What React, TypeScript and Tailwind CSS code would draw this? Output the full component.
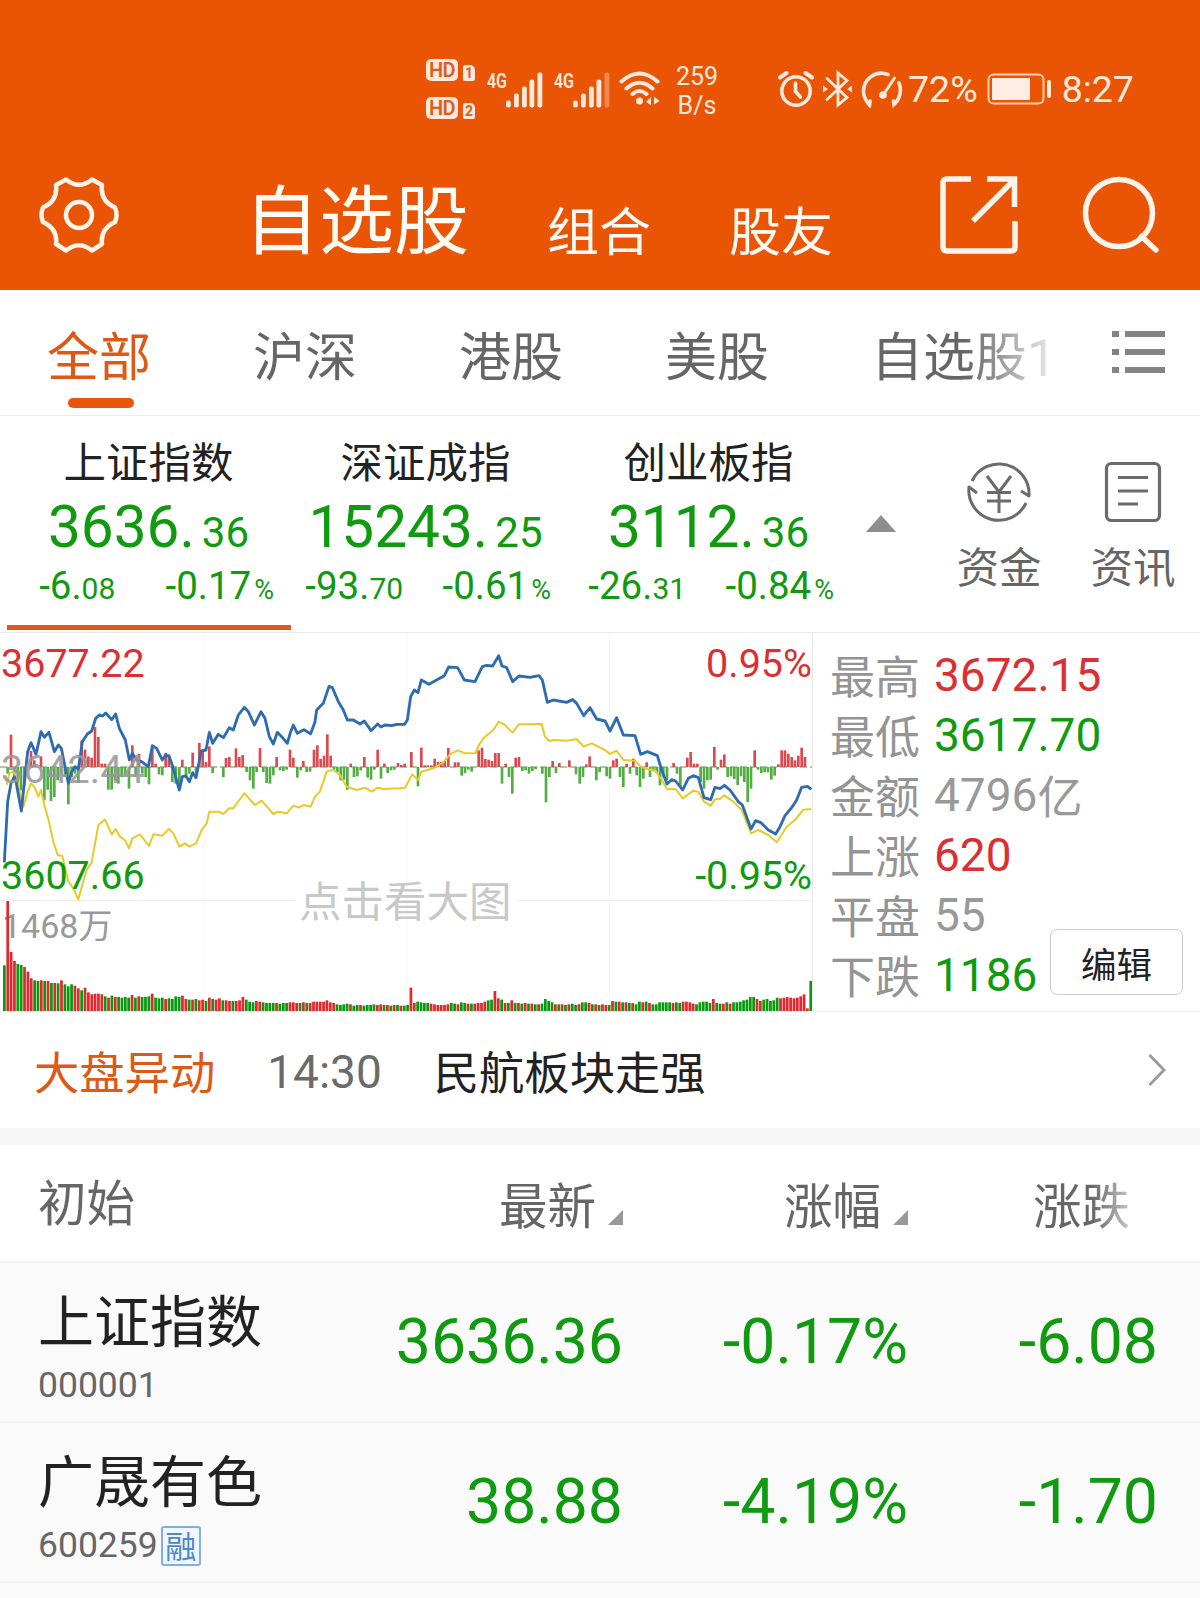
import { ReactNode } from 'react';

// ── Data ──────────────────────────────────────────────────────

const TABS = ['全部', '沪深', '港股', '美股'];

const INDICES = [
  { name: '上证指数', int: '3636.', dec: '36', chg: '-6.', chgDec: '08', pct: '-0.17', spacing: '-mr-[4px]' },
  { name: '深证成指', int: '15243.', dec: '25', chg: '-93.', chgDec: '70', pct: '-0.61', spacing: 'mr-[2px]' },
  { name: '创业板指', int: '3112.', dec: '36', chg: '-26.', chgDec: '31', pct: '-0.84', spacing: 'mr-[2px]' },
];

const STATS = [
  { label: '最高', value: '3672.15', color: 'text-[#db2f33]' },
  { label: '最低', value: '3617.70', color: 'text-[#0f9a10]' },
  { label: '金额', value: '4796', unit: '亿', color: 'text-[#999]' },
  { label: '上涨', value: '620', color: 'text-[#db2f33]' },
  { label: '平盘', value: '55', color: 'text-[#999]' },
  { label: '下跌', value: '1186', color: 'text-[#0f9a10]' },
];

const STOCKS = [
  { name: '上证指数', code: '000001', margin: false, price: '3636.36', pct: '-0.17%', chg: '-6.08' },
  { name: '广晟有色', code: '600259', margin: true, price: '38.88', pct: '-4.19%', chg: '-1.70' },
];

// Chart coordinates are in thirds of a pixel.
const PRICE_LINE =
  '13,712 23,530 33,475 43,455 48,470 64,558 83,380 93,353 108,388 123,320 133,337 147,322 163,380 175,360 184,370 205,475 215,440 225,425 235,432 247,350 262,327 275,318 287,280 298,270 308,273 317,264 335,284 347,267 358,310 376,345 388,405 397,385 410,405 425,410 445,425 457,362 470,370 487,405 497,390 508,395 520,430 538,495 547,455 558,453 568,470 578,443 588,458 604,378 618,375 628,322 638,355 655,328 670,338 688,308 700,315 715,270 733,247 745,260 763,300 783,260 795,280 808,335 820,357 832,322 845,335 862,355 872,320 880,300 892,325 912,314 932,326 945,290 950,255 970,235 987,184 997,188 1015,230 1030,255 1042,285 1060,285 1080,297 1093,288 1113,317 1133,297 1143,306 1155,300 1175,302 1190,298 1214,298 ' +
  '1222,285 1232,215 1243,195 1254,203 1264,165 1287,178 1315,162 1333,152 1346,126 1373,128 1393,165 1425,170 1447,125 1460,121 1478,123 1496,92 1506,123 1520,128 1538,170 1557,153 1590,157 1617,152 1627,165 1642,232 1660,225 1700,232 1718,224 1730,235 1751,272 1770,248 1790,282 1815,288 1830,318 1850,278 1870,330 1905,332 1922,388 1942,380 1972,392 1985,435 2001,477 2015,464 2027,468 2048,495 2065,460 2080,452 2095,458 2112,518 2132,524 2145,487 2160,491 2173,481 2190,495 2215,530 2227,540 2253,612 2267,587 2283,593 2305,615 2327,627 2340,605 2355,572 2375,548 2390,525 2405,487 2422,484 2434,493';

const AVG_LINE =
  '20,480 28,445 40,440 52,470 70,545 83,500 93,475 103,485 115,515 123,495 133,540 147,590 160,650 173,690 187,693 205,770 220,790 235,823 247,780 260,735 275,712 295,600 315,583 335,628 347,612 360,635 376,647 387,670 397,640 420,628 447,663 460,628 487,632 507,612 520,625 538,665 555,655 568,665 588,655 605,615 620,595 628,560 655,560 670,567 688,550 700,550 718,525 733,505 765,540 785,527 820,567 835,560 860,565 880,542 895,548 912,540 932,545 945,515 960,500 980,440 1000,434 1020,450 1040,485 1070,495 1095,488 1115,500 1133,488 1150,492 1200,490 ' +
  '1215,488 1237,448 1254,465 1264,440 1300,430 1330,412 1350,388 1373,376 1395,385 1427,384 1437,360 1450,340 1480,315 1496,290 1515,300 1537,323 1557,298 1625,297 1635,335 1647,348 1660,345 1700,347 1730,342 1751,365 1775,355 1815,375 1830,387 1850,377 1870,405 1905,407 1922,425 1942,432 1967,438 1985,465 2001,492 2027,492 2048,520 2080,497 2095,500 2112,530 2132,542 2145,523 2160,522 2173,511 2200,530 2225,555 2253,625 2275,615 2305,630 2330,652 2360,605 2385,585 2410,554 2434,552';

// [x, height], red above the axis when positive, green below when negative
const MOMENTUM: [number, number][] = [
  [23, -20], [33, 97], [43, -40], [53, -60], [63, -70], [73, -55], [93, 48], [103, 20], [123, 32],
  [133, -100], [143, -68], [153, -102], [163, -90], [173, -40], [183, -20], [195, -30], [205, -112], [215, -30], [225, -20], [235, -48],
  [245, 80], [255, 52], [265, 32], [275, 28], [285, 120], [295, 90], [305, 10], [315, 10],
  [325, -68], [335, -68], [345, -40], [355, -50], [365, -30], [375, -30], [387, -65], [397, 65], [407, -30], [417, 40], [427, -20], [437, -30], [447, -52],
  [457, 60], [467, 10], [477, -22], [487, -25], [497, 42], [507, 38], [517, -45], [527, -50], [538, -55], [547, 22], [558, -25], [568, -20], [578, 43], [588, -20],
  [598, 72], [608, 45], [618, 15], [628, 62], [638, -18], [670, -30], [678, 27], [688, 30], [708, 56], [718, 30], [728, 36],
  [740, -15], [750, -40], [760, -65], [770, -15], [780, 57], [790, -15], [800, -48], [810, -50], [820, -25], [830, 30], [840, -10], [850, -12], [860, -8],
  [870, 52], [880, 28], [892, -32], [902, -10], [910, 18], [920, -15], [930, -14], [942, 52], [952, 65], [962, 24], [972, 34], [982, 98], [992, 34],
  [1002, -8], [1012, -15], [1022, -40], [1032, -38], [1042, -68], [1052, 10], [1062, -30], [1072, -28], [1082, -10], [1093, 30], [1103, -32], [1113, -38], [1123, -8],
  [1133, 52], [1143, -35], [1153, 10], [1163, -18], [1173, -10], [1183, -8], [1194, 12], [1204, 6], [1214, 10],
  [1234, 45], [1254, -58], [1264, 58], [1274, 5], [1284, 5], [1294, 5], [1304, 25], [1314, 15], [1324, 15], [1334, 18], [1345, 57], [1365, 14], [1375, 14],
  [1385, -26], [1395, -18], [1405, -8], [1415, -14], [1436, 50], [1446, 58], [1456, 24], [1466, 22], [1476, 18], [1486, 42], [1496, 42],
  [1506, -50], [1517, 10], [1527, -30], [1537, -80], [1547, 28], [1557, 30], [1567, -12], [1577, -10], [1587, -20], [1597, -12], [1607, -6], [1627, -20], [1638, -106], [1648, -30],
  [1658, 18], [1668, -18], [1678, 12], [1708, 20], [1728, -22], [1739, -50], [1749, -30], [1759, 8], [1769, 32], [1789, -40], [1799, -15], [1820, -28], [1830, -35],
  [1840, 20], [1850, 25], [1860, -30], [1870, -60], [1880, 10], [1890, -20], [1900, 25], [1910, -25], [1920, -60], [1930, -35], [1940, 14], [1950, -30], [1960, -12], [1970, -18], [1980, -55], [1990, -30], [2001, -40],
  [2021, 12], [2031, -20], [2041, -62], [2062, 28], [2072, 45], [2082, 10], [2092, 10], [2102, -45], [2112, -65], [2122, -40], [2132, -38], [2143, 60], [2153, -8], [2163, 22], [2173, 38],
  [2183, -30], [2193, -28], [2203, -36], [2213, -54], [2223, -28], [2233, -45], [2243, -105], [2253, -65], [2264, 50], [2274, -8], [2284, -18], [2294, -16], [2304, -16], [2314, -38], [2324, -26],
  [2335, 8], [2345, 50], [2355, 50], [2365, 40], [2375, 30], [2385, 20], [2395, 34], [2405, 58], [2415, 30],
];

// One bar a minute, negative when the minute closed lower
const VOLUME = [
  -137, 330, 177, 150, -141, -138, 132, 118, 98, -92, -90, 92, -90, 90, -84, 84, -83, 92, -80, -74,
  -80, 76, 68, -62, 70, 56, 50, 52, 52, 50, -44, 40, -46, 42, -42, -40, -42, -40, 48, -40,
  44, -42, -42, -44, 52, -40, -38, -40, 36, -38, -36, -44, -42, 46, 36, -34, 34, -36, 32, 34,
  -30, 40, -36, 34, 38, -32, 32, 30, -30, 30, 32, 42, -34, -28, -26, 30, 28, -26, -24, -24,
  -24, 24, -22, -24, -24, 26, 26, 24, -24, 26, -24, 24, 28, 28, 28, 28, 32, 26, 24, -20,
  -18, -20, -22, 20, -16, -18, 18, -16, -18, -18, -20, 18, 20, -18, 18, -16, 18, -18, 16, -16,
  -18, 70, 24, -28, -26, -24, -24, 22, 20, 18, 18, 18, 20, -24, -22, 20, -26, -24, 22, -22,
  22, 24, 24, 28, -32, -34, 60, 38, -34, 24, -24, 32, -24, 24, -22, 24, -22, 22, -20, 20,
  -22, -36, -30, -26, 20, -20, 20, -18, 20, -22, -18, 20, -26, -26, 24, -20, 20, -18, 20, 18,
  -18, 30, -28, 28, -26, 26, -24, 24, -20, -28, 26, -28, 24, -20, -20, -26, -26, -26, -26, 24,
  -26, -24, 28, 28, 26, 22, -20, -26, -28, -28, -24, 36, -24, -22, 22, -26, 22, -26, -26, -28,
  -32, -34, -42, -42, 36, 30, -34, -36, -30, -32, -40, 38, 40, 42, 40, 38, 40, 44, 50, 8,
  -90,
];

// ── Status bar ────────────────────────────────────────────────

function HdBadge({ sim }: { sim: string }) {
  return (
    <div className="flex items-end gap-[5px]">
      <span className="flex h-[22px] w-[32px] items-center justify-center rounded-[5px] bg-[#ffe9dc] text-[20px] font-semibold leading-none tracking-tight text-[#d8601f]">HD</span>
      <span className="flex h-[16px] w-[12px] items-center justify-center rounded-[2px] rounded-tr-[5px] bg-[#ffe9dc] text-[14px] font-bold leading-none text-[#d8601f]">{sim}</span>
    </div>
  );
}

function Signal({ weak = false }: { weak?: boolean }) {
  return (
    <svg width="56" height="44" viewBox="0 -8 56 44" fill="#ffe9dc">
      <text x="0" y="15.500" fontSize="21" fontWeight="600" textLength="20" lengthAdjust="spacingAndGlyphs">4G</text>
      <rect x="19" y="28.500" width="4.800" height="7" rx="2" />
      <rect x="27" y="21.500" width="4.800" height="14" rx="2" />
      <rect x="35" y="14.500" width="4.800" height="21" rx="2" />
      <rect x="42.500" y="7.500" width="4.800" height="28" rx="2" />
      <rect x="50.500" y="0.500" width="4.800" height="35" rx="2" opacity={weak ? 0.35 : 1} />
    </svg>
  );
}

function StatusBar() {
  return (
    <div className="flex h-[124px] items-center pl-[426px] pt-[54px] text-[#ffe9dc]">
      <div className="flex flex-col gap-4">
        <HdBadge sim="1" />
        <HdBadge sim="2" />
      </div>
      <div className="-mt-[7px] ml-3 flex gap-[11px]">
        <Signal />
        <Signal weak />
      </div>
      <svg className="ml-[9px]" width="42" height="36" viewBox="0 0 42 36" fill="none" stroke="#ffe9dc" strokeWidth="4" strokeLinecap="round">
        <path d="M2.500 10.500Q20.500 -5.500 38.500 10.500M7.500 17.500Q20.500 6 33.500 17.500M13.500 23Q20.500 17 27.500 23" />
        <circle cx="20.500" cy="30" r="3.500" fill="#ffe9dc" stroke="none" />
        <path d="M32 26v8l-5-3zM35 25.500v8l5.500-3.500z" fill="#ffe9dc" stroke="none" />
      </svg>
      <div className="ml-[14px] mt-[3px] w-[44px] text-center text-[25px] leading-[29px]">259<br />B/s</div>
      <svg className="ml-[59px]" width="36" height="36" viewBox="0 0 36 36" fill="none" stroke="#ffe9dc" strokeWidth="3.600" strokeLinecap="round">
        <circle cx="18" cy="20" r="14.200" />
        <path d="M17.500 12v8.500l5 5.500" />
        <path d="M2 6.500L8.500 2M34 6.500L27.500 2" strokeWidth="4" />
      </svg>
      <svg className="ml-[9px]" width="30" height="38" viewBox="0 0 30 38" fill="none" stroke="#ffe9dc" strokeWidth="2.800">
        <path d="M4 8.500L24 27.500L15 35V3L24 10.500L4 29.500" strokeLinecap="round" />
        <path d="M0 15.500l5 3.500-5 3.500zM29 15.500L24 19l5 3.500z" fill="#ffe9dc" stroke="none" />
      </svg>
      <svg className="ml-[8px]" width="42" height="38" viewBox="0 0 42 38" fill="none" stroke="#ffe9dc" strokeWidth="3.600" strokeLinecap="round">
        <path d="M27 4.500C14 -0.500 2 10 2.500 22C2.800 27 5 31 8.500 35L9 31M38 13C41 20 39 29 33 34.500L32.500 31" />
        <path d="M22.500 24.500L33.500 8" strokeWidth="3" />
        <circle cx="22" cy="25" r="3.800" fill="#ffe9dc" stroke="none" />
      </svg>
      <span className="ml-[5px] mt-[2px] text-[37.500px] leading-none">72%</span>
      <svg className="ml-[9px]" width="65" height="32" viewBox="0 0 65 32" fill="none">
        <rect x="1.500" y="1.500" width="55" height="29" rx="5" stroke="#ffd0b0" strokeWidth="2" />
        <rect x="5" y="5" width="38" height="22" rx="1" fill="#ffece2" />
        <rect x="60" y="7" width="4" height="18" rx="2" fill="#ffe9dc" />
      </svg>
      <span className="ml-[10px] mt-[2px] text-[37.500px] leading-none">8:27</span>
    </div>
  );
}

// ── Header ────────────────────────────────────────────────────

function Header() {
  return (
    <header className="h-[290px] bg-[#e95504]">
      <StatusBar />
      <div className="flex h-[166px] items-start pl-[38px] pt-[52px] text-[#fffaf3]">
        <svg width="82" height="78" viewBox="0 0 82 78" fill="none" stroke="#fff3ea" strokeWidth="4.500" strokeLinejoin="round">
          <path d="M28 3.500Q41 14 54 3.500L64 9Q62 25 77 31.500Q80 39 77 46Q62 53 64 68L54 74.500Q41 64 28 74.500L18 68Q20 53 5 46Q2 39 5 31.500Q20 25 18 9Z" />
          <circle cx="41" cy="39" r="13" />
        </svg>
        <span className="ml-[124px] mt-[5px] text-[75px] leading-[82px]">自选股</span>
        <span className="ml-[78px] mt-[19px] text-[52px] leading-[78px]">组合</span>
        <span className="ml-[78px] mt-[19px] text-[52px] leading-[78px]">股友</span>
        <svg className="ml-[107px]" width="78" height="78" viewBox="0 0 78 78" fill="none" stroke="#fff3ea" strokeWidth="5.500">
          <path d="M31 3H7Q3 3 3 7V71Q3 75 7 75H71Q75 75 75 71V45" />
          <path d="M47 3H74.500V31M74.500 3.500L33 45" />
        </svg>
        <svg className="ml-[64px]" width="78" height="78" viewBox="0 0 78 78" fill="none" stroke="#fff3ea" strokeWidth="5.500" strokeLinecap="round">
          <circle cx="37" cy="37" r="33.500" />
          <path d="M59.500 60.500L74 74" />
        </svg>
      </div>
    </header>
  );
}

function MarketTabs() {
  return (
    <nav className="flex h-[126px] border-b border-[#ececec] pl-[47px] text-[52px] text-[#666]">
      {TABS.map((t, i) => (
        <div key={t} className="mr-[102px] flex w-[104px] flex-col items-center pt-[30px]">
          <span className={i === 0 ? 'leading-[78px] text-[#dc5916]' : 'leading-[78px]'}>{t}</span>
          {i === 0 && <span className="ml-[4px] h-[10px] w-[66px] rounded-full bg-[#e9550a]" />}
        </div>
      ))}
      <span className="w-[188px] bg-linear-to-r from-[#666] from-50% to-[#e8e8e8] to-95% bg-clip-text pt-[30px] leading-[78px] text-transparent">自选股1</span>
      <svg className="ml-[53px] mt-[40px]" width="54" height="44" viewBox="0 0 54 44" fill="#838383">
        {[1, 19, 37].map(y => (
          <g key={y}>
            <rect x="0" y={y} width="7" height="6" />
            <rect x="13" y={y} width="40" height="6" />
          </g>
        ))}
      </svg>
    </nav>
  );
}

// ── Index summary ─────────────────────────────────────────────

function Shortcut({ label, children }: { label: string; children: ReactNode }) {
  return (
    <div className="flex w-[86px] flex-col items-center pt-[43px]">
      {children}
      <span className="mt-[14px] text-[42.500px] leading-[60px] text-[#666]">{label}</span>
    </div>
  );
}

function IndexBar() {
  return (
    <section className="flex h-[217px] border-b border-[#e8e8e8] pl-[8px]">
      {INDICES.map((x, i) => (
        <div key={x.name} className={`flex w-[281px] flex-col items-center pt-[17px] text-[#0f9a10] ${x.spacing}`}>
          <span className="h-[60px] text-[42.500px] leading-[62px] text-[#222]">{x.name}</span>
          <div className="flex h-[69px] items-baseline leading-[68px]">
            <span className="text-[58.500px]">{x.int}</span>
            <span className="ml-[7px] text-[42px]">{x.dec}</span>
          </div>
          <div className="grid h-[48px] w-[285px] grid-cols-2 text-center text-[38.500px] leading-[48px]">
            <span>{x.chg}<span className="text-[30px]">{x.chgDec}</span></span>
            <span>{x.pct}<span className="ml-[3px] text-[27px]">%</span></span>
          </div>
          {i === 0 && <span className="mt-[15px] h-[5px] w-[284px] shrink-0 bg-[#d95c1c]" />}
        </div>
      ))}
      <svg className="ml-[15px] mt-[99px]" width="30" height="17" viewBox="0 0 30 17"><path d="M15 0L30 17H0Z" fill="#8e8e8e" /></svg>
      <div className="ml-[60px] flex gap-[48px]">
        <Shortcut label="资金">
          <svg width="66" height="66" viewBox="0 0 66 66" fill="none" stroke="#6b6b6b" strokeWidth="3">
            <path d="M6 22A30 30 0 0 1 63 37L55 32M60 44A30 30 0 0 1 3 28L11 34" strokeLinejoin="round" />
            <path d="M21 17L33 33L45 17M33 33V54M21 33.500H45M21 42H45" />
          </svg>
        </Shortcut>
        <Shortcut label="资讯">
          <svg width="60" height="66" viewBox="0 0 60 66" fill="none" stroke="#6b6b6b" strokeWidth="3.200">
            <rect x="3.500" y="4.500" width="53" height="57" rx="5" />
            <path d="M15 18.500H45M15 32H45M15 45H35" />
          </svg>
        </Shortcut>
      </div>
    </section>
  );
}

// ── Intraday chart ────────────────────────────────────────────

function IntradayChart() {
  return (
    <div className="relative w-[813px] border-r border-[#e8e8e8] text-[39.500px] leading-none">
      <span className="absolute left-[2px] top-[276px] text-[34px] text-[#999]">1468万</span>
      <svg className="relative block" width="812" height="378" viewBox="0 24 2436 1134" fill="none">
        <path d="M612 24V1158M1221 24V1158M1828 24V1158" stroke="#f6f6f6" strokeWidth="3" />
        <path d="M0 826H882M1550 826H2436" stroke="#ebebeb" strokeWidth="3" />
        <path d="M0 426H2436" stroke="#4c9a4c" strokeWidth="3" strokeDasharray="22 8" />
        {VOLUME.map((v, i) => (
          <rect key={i} x={9 + i * 10.08} y={1158 - Math.abs(v)} width="8.200" height={Math.abs(v)} fill={v > 0 ? '#e0292f' : '#0a980e'} />
        ))}
        {MOMENTUM.map(([x, h]) => (
          <rect key={x} x={x - 4} y={h > 0 ? 426 - h : 426} width="8" height={Math.abs(h)} fill={h > 0 ? '#dc4a50' : '#54ad43'} />
        ))}
        <polyline points={AVG_LINE} stroke="#e9c928" strokeWidth="6" strokeLinejoin="round" />
        <polyline points={PRICE_LINE} stroke="#2e6bb0" strokeWidth="8.500" strokeLinejoin="round" />
      </svg>
      <span className="absolute left-px top-[11px] text-[#db2f33]">3677.22</span>
      <span className="absolute left-px top-[117px] text-[#999]/90">3642.44</span>
      <span className="absolute left-px top-[223px] text-[#0f9a10]">3607.66</span>
      <span className="absolute right-0 top-[11px] text-[#db2f33]">0.95%</span>
      <span className="absolute right-0 top-[223px] text-[#0f9a10]">-0.95%</span>
      <span className="absolute left-[299px] top-[249px] text-[42.500px] text-[#c8c8c8]">点击看大图</span>
    </div>
  );
}

function MarketPanel() {
  return (
    <section className="flex h-[379px] border-b border-[#ececec]">
      <IntradayChart />
      <div className="relative flex-1 pl-[17px] pt-[12px]">
        {STATS.map(s => (
          <div key={s.label} className="flex h-[60px] items-center leading-[60px]">
            <span className="pt-[7px] text-[45px] text-[#949494]">{s.label}</span>
            <span className={`ml-[14px] text-[46px] ${s.color}`}>{s.value}</span>
            {s.unit && <span className="pt-[7px] text-[45px] text-[#999]">{s.unit}</span>}
          </div>
        ))}
        <button className="absolute bottom-[16px] right-[17px] h-[66px] w-[133px] rounded-[7px] border border-[#ccc] bg-white pt-[8px] text-[35.500px] leading-[56px] text-[#222]">编辑</button>
      </div>
    </section>
  );
}

function AlertRow() {
  return (
    <section className="flex h-[133px] items-center border-b-[17px] border-[#f7f7f7] pl-[34px] pr-[34px] text-[45.300px]">
      <span className="pt-[9px] text-[#dc5916]">大盘异动</span>
      <span className="ml-[52px] pt-[4px] text-[46px] text-[#6b6b6b]">14:30</span>
      <span className="ml-[52px] pt-[9px] text-[#222]">民航板块走强</span>
      <svg className="ml-auto" width="18" height="32" viewBox="0 0 18 32" fill="none" stroke="#9a9a9a" strokeWidth="2.800"><path d="M1.500 1L16 16L1.500 31" /></svg>
    </section>
  );
}

// ── Watch list ────────────────────────────────────────────────

function SortMark() {
  return (
    <svg className="ml-[12px] mt-[19px]" width="15" height="15" viewBox="0 0 15 15"><path d="M15 0V15H0Z" fill="#999" /></svg>
  );
}

function WatchList() {
  return (
    <section className="flex-1 bg-[#fafafa]">
      <div className="flex h-[118px] items-center border-b-2 border-[#f2f2f2] bg-white pl-[38px] text-[48.500px] text-[#666]">
        <span className="w-[250px] pt-[4px]">初始</span>
        <span className="flex w-[335px] items-center justify-end pt-[10px]">最新<SortMark /></span>
        <span className="flex w-[285px] items-center justify-end pt-[10px]">涨幅<SortMark /></span>
        <span className="ml-[125px] bg-linear-to-r from-[#666] from-60% to-[#c8c8c8] bg-clip-text pt-[10px] text-transparent">涨跌</span>
      </div>
      {STOCKS.map(s => (
        <div key={s.code} className="flex h-[160px] items-center border-b-2 border-[#f1f1f1] pl-[38px] text-[62.500px] text-[#0f9a10]">
          <div className="flex w-[250px] flex-col pt-[10px]">
            <span className="h-[78px] text-[56px] leading-[80px] text-[#222]">{s.name}</span>
            <span className="flex h-[50px] items-center text-[35.500px] text-[#666]">
              {s.code}
              {s.margin && (
                <span className="ml-[3px] flex h-[40px] w-[40px] items-center justify-center rounded-[3px] border-2 border-[#84aedb] bg-[#eef7ff] pt-[3px] text-[31px] leading-none text-[#4b87c9]">融</span>
              )}
            </span>
          </div>
          <span className="w-[335px] text-right">{s.price}</span>
          <span className="w-[285px] text-right">{s.pct}</span>
          <span className="w-[250px] text-right">{s.chg}</span>
        </div>
      ))}
    </section>
  );
}

export default function App() {
  return (
    <div className="flex h-[1598px] w-[1200px] flex-col overflow-hidden whitespace-nowrap bg-white font-[Roboto,'Noto_Sans_CJK_SC',sans-serif]">
      <Header />
      <MarketTabs />
      <IndexBar />
      <MarketPanel />
      <AlertRow />
      <WatchList />
    </div>
  );
}
